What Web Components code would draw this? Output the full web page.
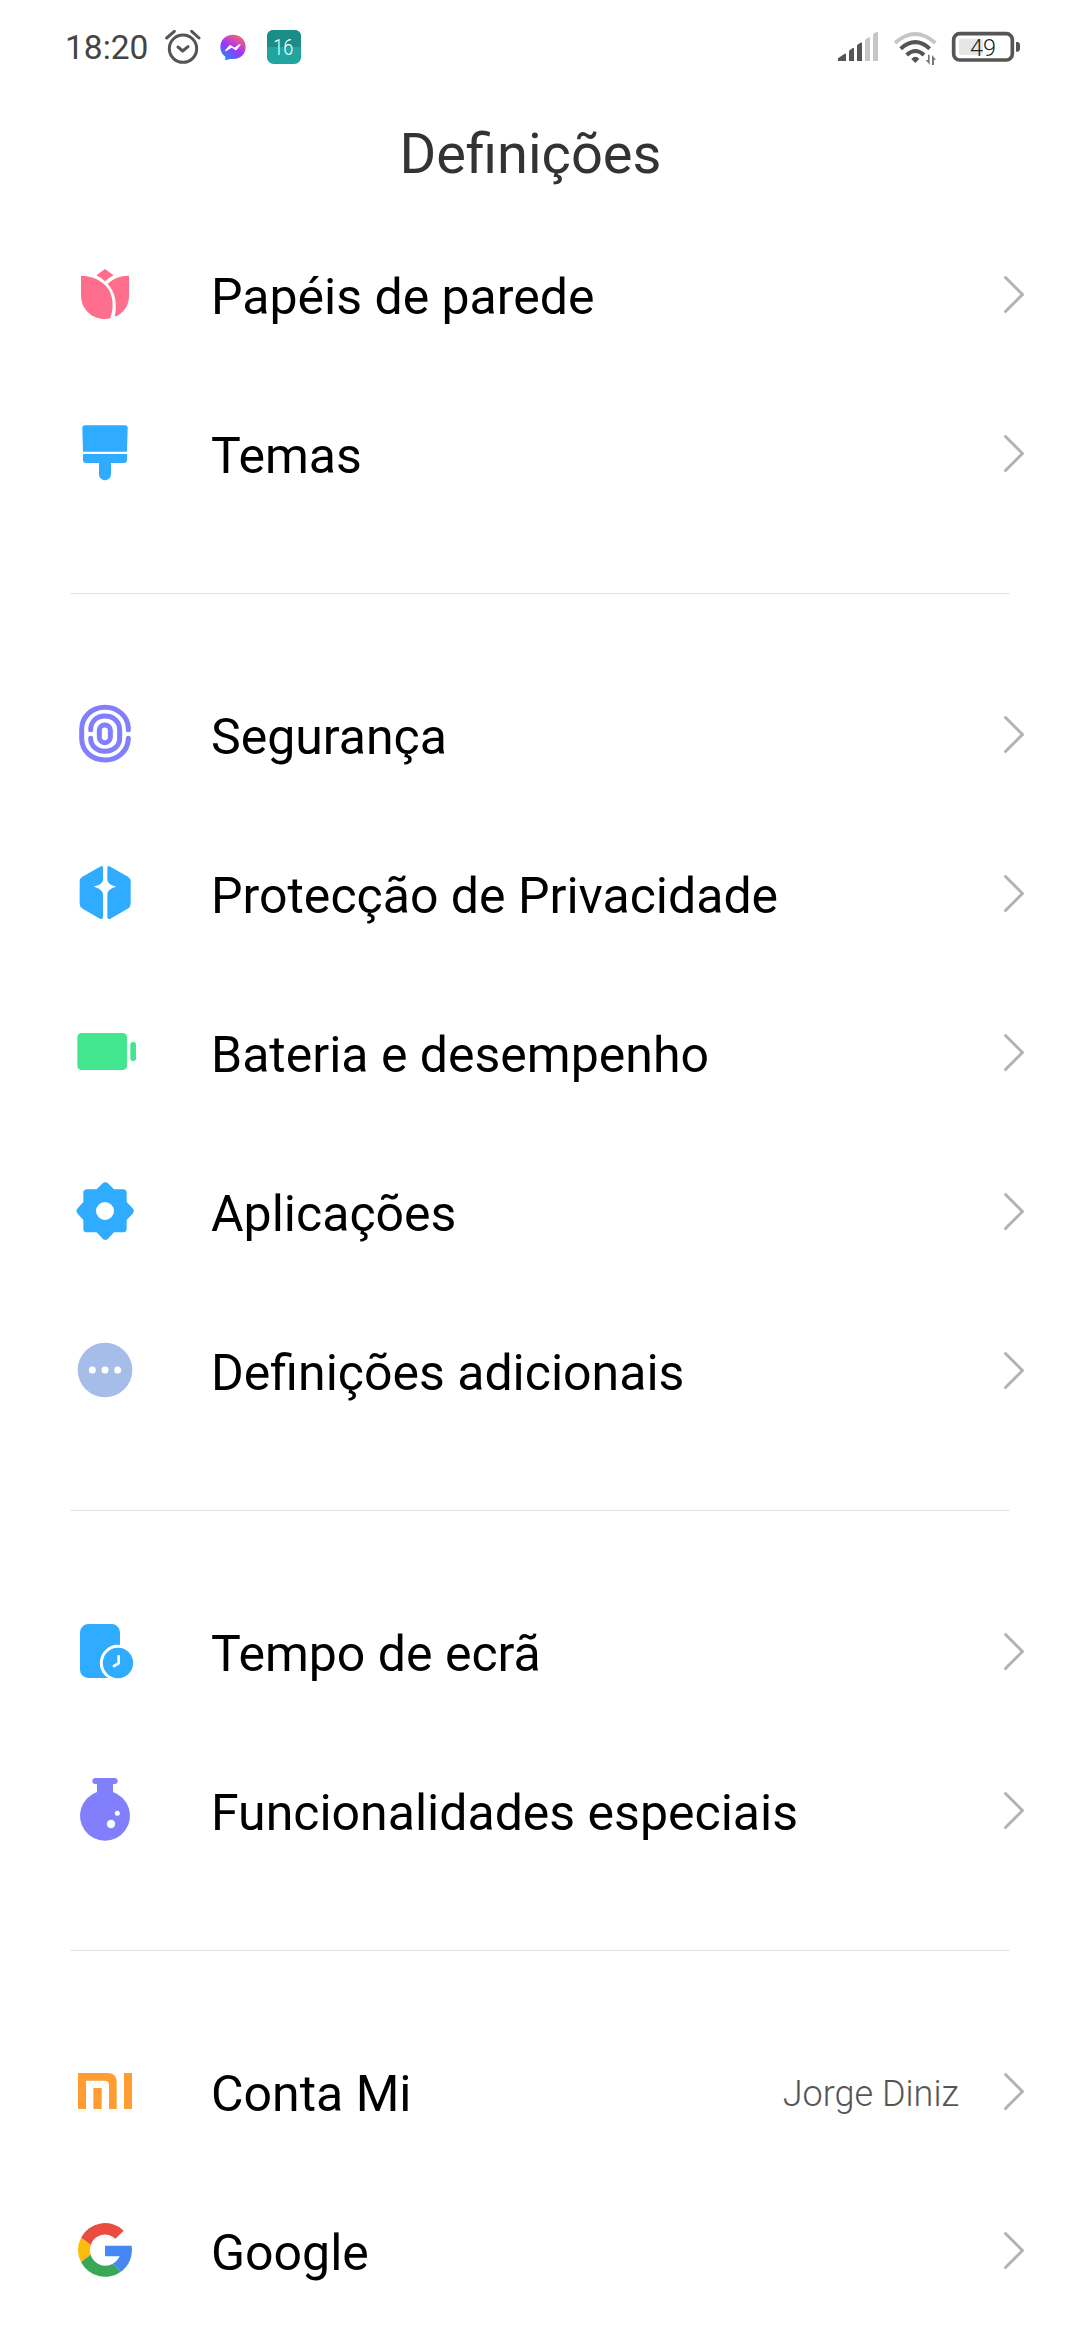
<!DOCTYPE html>
<html lang="pt"><head><meta charset="utf-8"><title>Definições</title>
<style>html,body{margin:0;background:#fff}body{width:1080px;height:2340px;overflow:hidden;font-family:Roboto,sans-serif}</style></head>
<body>
<settings-screen></settings-screen>
<script>
const ICONS={
tulip:['45 42 183 183','<g fill="#ff6e8c"><path d="M135 57L161 76Q145 84 135 94Q126 84 109 76Z"/><path d="M63 77C130 80 176 125 151 205Q144 207 135 207C95 207 63 176 63 137Z"/><path d="M207 77V137C207 168 189 191 164 200C173 160 165 125 143 102C160 85 180 77 207 77Z"/></g>'],
brush:['45 519 183 183','<g fill="#2fabff"><path d="M75 526H195Q203 526 203 534L201 605H69L67 534Q67 526 75 526Z"/><path d="M69 612H201V630Q201 639 192 639H153V673A18 18 0 0 1 117 673V639H78Q69 639 69 630Z"/></g>'],
finger:['45 42 183 183','<g fill="none" stroke="#817ffc" stroke-width="15" stroke-linecap="round"><path d="M205 119V114C203 78 173 52 135 52C95 52 65 80 65 119V145C65 183 95 210 135 210C173 210 203 184 205 147V145"/><path d="M92 119C92 94 110 78 135 78C160 78 179 95 179 119V145C179 168 160 184 135 184C110 184 92 168 92 145"/><rect x="118" y="105" width="33" height="53" rx="16"/></g>'],
privacy:['45 519 183 183','<g fill="#2fabff"><path d="M129 534V568C129 580 117 586 101 590C117 594 129 601 129 614V680Q129 690 120 686L68 656Q59 650 59 641V574Q59 565 67 560L120 530Q129 525 129 534Z"/><path d="M142 534V568C142 580 153 586 169 590C153 594 142 601 142 614V680Q142 690 151 686L203 656Q212 650 212 641V574Q212 565 204 560L151 530Q142 525 142 534Z"/></g>'],
battery:['45 36 183 183','<g fill="#42e68f"><rect x="52" y="69" width="149" height="111" rx="13"/><rect x="211" y="96" width="17" height="57" rx="8"/></g>'],
gear:['45 513 183 183','<path fill="#2fabff" fill-rule="evenodd" d="M128 520Q136 513 144 520L162 538H189Q200 538 200 549V576L218 595Q225 603 218 611L200 630V656Q200 667 189 667H162L144 686Q136 693 128 686L110 667H81Q70 667 70 656V630L53 611Q46 603 53 595L70 576V549Q70 538 81 538H110ZM135 576a27 27 0 1 0 0 54a27 27 0 1 0 0-54Z"/>'],
more:['45 990 183 183','<circle cx="135" cy="1080" r="82" fill="#a7bde9"/><g fill="#fff"><circle cx="97" cy="1080" r="10.500"/><circle cx="135" cy="1080" r="10.500"/><circle cx="173" cy="1080" r="10.500"/></g>'],
screen:['45 63 183 183','<rect x="60" y="72" width="120" height="162" rx="25" fill="#2fabff"/><circle cx="174" cy="189" r="50" fill="#2fabff" stroke="#fff" stroke-width="9"/><path d="M176 169V190L162 198" fill="none" stroke="#fff" stroke-width="8" stroke-linecap="round" stroke-linejoin="round"/>'],
flask:['45 540 183 183','<g fill="#817ffc"><rect x="97" y="534" width="76" height="18" rx="9"/><path d="M111 545H159V576A75 75 0 1 1 111 576Z"/></g><g fill="#fff"><circle cx="172" cy="640" r="7.500"/><circle cx="153" cy="672" r="12.500"/></g>'],
mi:['45 33 183 183','<g fill="#ff9c32"><path d="M54 69H145Q170 71 170 95V177H147V105Q147 92 134 92H78V177H54Z"/><path d="M100 114H125V177H100ZM192 69H216V177H192Z"/></g>'],
google:['45 510 183 183','<g><path fill="#ea4c40" d="M63 563A81 81 0 0 1 191 542L166 566A45 45 0 0 0 92 585Z"/><path fill="#fbbc0b" d="M63 563A81 81 0 0 0 63 636L92 614A46 46 0 0 1 92 585Z"/><path fill="#3aa757" d="M63 636A81 81 0 0 0 183 665L157 642A46 46 0 0 1 92 614Z"/><path fill="#4787f3" d="M135 587H215C219 618 208 646 183 665L157 642Q174 632 179 619H135Z"/></g>']};
const define=(name,build)=>customElements.define(name,class extends HTMLElement{
  connectedCallback(){if(!this.shadowRoot)this.attachShadow({mode:'open'}).innerHTML=build(this)}});
define('setting-icon',e=>{const [box,art]=ICONS[e.getAttribute('name')];
  return `<style>:host{display:block;width:61px;height:61px}svg{display:block;overflow:visible}</style><svg width="61" height="61" viewBox="${box}">${art}</svg>`});
define('setting-row',e=>`<style>
:host{display:flex;align-items:center;height:159px;padding:0 55px 0 75px;box-sizing:border-box}
setting-icon{flex:none}
.label{flex:1;margin-left:75px;font-size:50px;line-height:60px;color:#000;white-space:nowrap;padding-top:4px}
.value{font-size:36px;font-weight:300;line-height:44px;color:#555;margin-right:44px;padding-top:5px}
.arrow{display:block;flex:none}</style>
<setting-icon name="${e.getAttribute('icon')}"></setting-icon><span class="label"><slot></slot></span><span class="value"><slot name="value"></slot></span>
<svg class="arrow" width="22" height="39" viewBox="0 0 22 39"><path d="M2.500 2.500L19.500 19.500L2.500 36.500" fill="none" stroke="#b2b2b2" stroke-width="3" stroke-linecap="round" stroke-linejoin="round"/></svg>`);
define('setting-divider',()=>`<style>:host{display:block;padding:60px 70px 61px}div{height:1px;background:#e4e4e4}</style><div></div>`);
define('status-bar',()=>`<style>
:host{display:flex;align-items:center;height:95px;padding:0 59px 0 65px;box-sizing:border-box;color:#444}
svg{display:block;flex:none}
.time{font-size:33.5px;line-height:40px;width:100px;flex:none}
.space{flex:1}text{font-family:Roboto,sans-serif}</style>
<span class="time">18:20</span>
<svg width="36" height="65" viewBox="345 0 108 195"><g fill="none" stroke="#555" stroke-width="9" stroke-linecap="round" stroke-linejoin="round"><circle cx="399" cy="101" r="41"/><path d="M350 69L373 49M425 49L447 69"/><path d="M384 96L398 108L414 95"/></g></svg>
<svg width="66" height="65" viewBox="453 0 198 195"><defs><linearGradient id="m" x1=".2" y1="1" x2=".8" y2="0"><stop offset="0" stop-color="#168fff"/><stop offset=".48" stop-color="#a033fa"/><stop offset="1" stop-color="#ff6968"/></linearGradient></defs><path fill="url(#m)" d="M549 59C572 59 587 75 587 96C587 118 571 132 549 132H540L526 136V125C516 118 511 108 511 96C511 75 527 59 549 59Z"/><path d="M527 107L540 92L553 101L570 89L558 104L546 95Z" fill="#fff" stroke="#fff" stroke-width="4" stroke-linejoin="round"/></svg>
<svg width="34" height="65" viewBox="648 0 102 195"><rect x="648" y="45" width="102" height="102" rx="20" fill="#21a69f"/><path fill="#198d86" d="M648 96V65Q648 45 668 45H730Q750 45 750 65V96Z"/><text x="697" y="120" text-anchor="middle" font-size="65" font-weight="300" fill="#fff" textLength="60" lengthAdjust="spacingAndGlyphs">16</text></svg>
<span class="space"></span>
<svg width="184" height="65" viewBox="51 0 552 195">
<g fill="#555"><path d="M54 138V130L74 116Q78 114 78 119V138ZM87 138V107L98 99Q102 97 102 102V138ZM111 138V91L121 83Q126 81 126 86V138Z"/><path fill="#c6c6c6" d="M135 138V75L145 67Q150 65 150 70V138ZM159 138V61Q162 51 174 51V138Z"/></g>
<g fill="none" stroke-width="12"><path stroke="#c6c6c6" d="M225 84Q286 30 346 84"/><path stroke="#555" d="M242 101Q286 62 329 101M260 120Q286 96 312 120"/></g><path fill="#555" d="M274 132Q286 119 298 132L286 144Z"/>
<path fill="#777" d="M329 119V149L317 135H324V119ZM336 150V120L348 134H342V150Z"/>
<rect x="401" y="56" width="176" height="79" rx="18" fill="none" stroke="#555" stroke-width="11"/><rect x="417" y="71" width="72" height="49" rx="7" fill="#e6e6e6"/><path fill="#555" d="M588 81H592Q600 82 600 90V101Q600 109 592 110H588Z"/>
<text x="489" y="122" text-anchor="middle" font-size="70" font-weight="300" fill="#222" textLength="78" lengthAdjust="spacingAndGlyphs">49</text></svg>`);
define('page-title',()=>`<style>:host{display:block;height:120px;padding:25px 19px 0 0;box-sizing:border-box;text-align:center;font-size:56px;line-height:68px;color:#333}</style><slot></slot>`);
define('settings-screen',()=>`<style>:host{display:block;width:1080px;height:2340px;overflow:hidden}</style>
<status-bar></status-bar><page-title>Definições</page-title>
<setting-row icon="tulip">Papéis de parede</setting-row><setting-row icon="brush">Temas</setting-row>
<setting-divider></setting-divider>
<setting-row icon="finger">Segurança</setting-row><setting-row icon="privacy">Protecção de Privacidade</setting-row><setting-row icon="battery">Bateria e desempenho</setting-row><setting-row icon="gear">Aplicações</setting-row><setting-row icon="more">Definições adicionais</setting-row>
<setting-divider></setting-divider>
<setting-row icon="screen">Tempo de ecrã</setting-row><setting-row icon="flask">Funcionalidades especiais</setting-row>
<setting-divider></setting-divider>
<setting-row icon="mi">Conta Mi<span slot="value">Jorge Diniz</span></setting-row><setting-row icon="google">Google</setting-row>`);
</script></body></html>
